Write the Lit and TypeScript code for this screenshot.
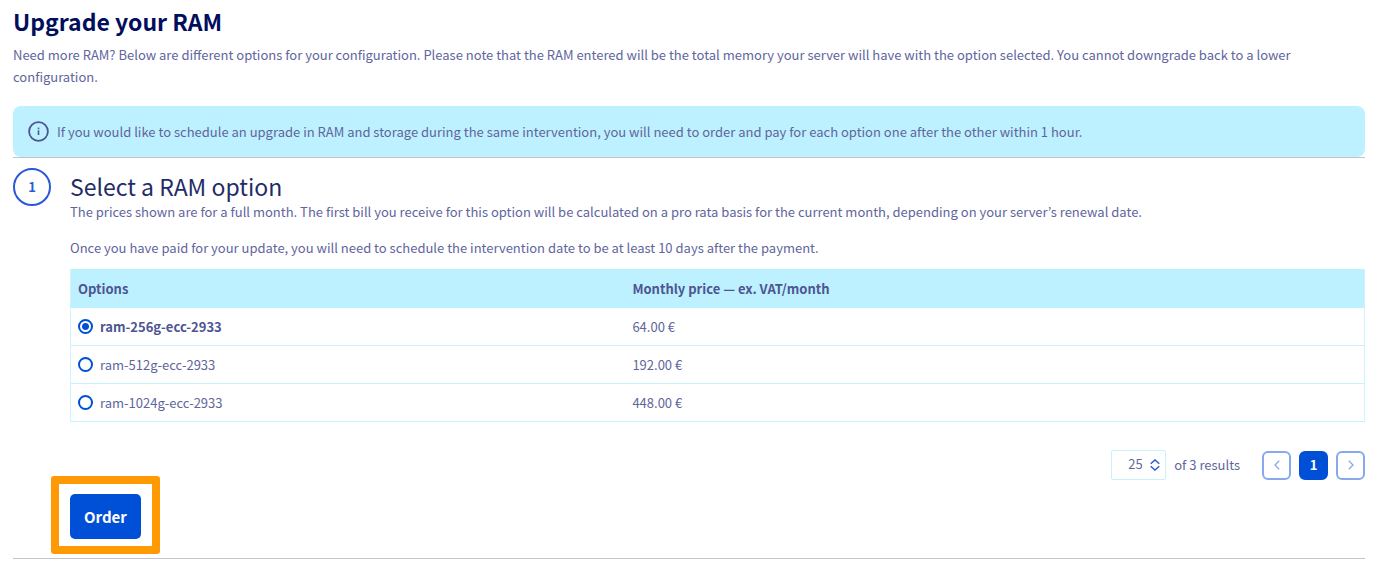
import { LitElement, html, css } from "lit";
import { customElement, state } from "lit/decorators.js";
import { classMap } from "lit/directives/class-map.js";

interface RamOption {
  id: string;
  price: string;
}

const OPTIONS: RamOption[] = [
  { id: "ram-256g-ecc-2933", price: "64.00 €" },
  { id: "ram-512g-ecc-2933", price: "192.00 €" },
  { id: "ram-1024g-ecc-2933", price: "448.00 €" },
];

@customElement("app-root")
export class AppRoot extends LitElement {
  static styles = css`
    :host {
      display: block;
      box-sizing: border-box;
      padding: 5px 35px 0 13px;
      background: #fff;
      color: #5f659d;
      font: 13px/22px "Noto Sans CJK KR", "Open Sans", sans-serif;
    }
    *, *::before, *::after { box-sizing: border-box; }
    h1, h2, p { margin: 0; }
    button, select { font: inherit; margin: 0; }
    h1 {
      color: #000e5c;
      font-size: 23px;
      line-height: 32px;
      font-weight: 700;
    }
    .intro { margin-top: 7px; padding-right: 24px; }
    .alert {
      display: flex;
      align-items: center;
      gap: 8px;
      margin-top: 18px;
      padding: 0 15px;
      min-height: 51px;
      border-radius: 8px;
      background: #bef1ff;
    }
    .alert svg { flex: none; }
    .step {
      display: flex;
      align-items: flex-start;
      gap: 19px;
      border-top: 1px solid #c4c4c4;
      border-bottom: 1px solid #c4c4c4;
      padding: 10px 0 4px;
    }
    .badge {
      flex: none;
      display: grid;
      place-items: center;
      width: 38px;
      height: 38px;
      border: 2px solid #2859dc;
      border-radius: 50%;
      color: #2859dc;
      font-weight: 700;
    }
    .body { flex: 1; min-width: 0; }
    h2 {
      color: #1f2c68;
      font-size: 23px;
      line-height: 30px;
      font-weight: 400;
      padding-top: 3px;
    }
    .body p + p { margin-top: 14px; }
    table {
      width: 100%;
      margin-top: 10px;
      border-spacing: 0;
      table-layout: fixed;
      border: 1px solid #cdf4ff;
      border-top: 0;
      border-bottom: 0;
    }
    th {
      height: 39px;
      padding: 0 7px;
      background: #bef1ff;
      color: #4d5592;
      text-align: left;
      font-weight: 700;
    }
    td {
      height: 38px;
      padding: 0 7px;
      border-bottom: 1px solid #c5f2ff;
    }
    tr > :last-child { padding-left: 8px; }
    .name { width: 42.8%; }
    .option {
      display: flex;
      align-items: center;
      gap: 7px;
    }
    .option.on { color: #4d5592; font-weight: 700; }
    .option input {
      appearance: none;
      flex: none;
      width: 15px;
      height: 15px;
      margin: 0;
      border: 2px solid #0050d7;
      border-radius: 50%;
      background: #fff;
    }
    .option input:checked {
      background: radial-gradient(circle, #0050d7 3px, #fff 4px);
    }
    .pager {
      display: flex;
      justify-content: flex-end;
      align-items: center;
      gap: 8px;
      margin-top: 28px;
    }
    .size { position: relative; display: block; }
    .size select {
      appearance: none;
      display: block;
      width: 55px;
      height: 30px;
      padding: 0 20px 2px 16px;
      border: 1px solid #c5f2ff;
      border-radius: 2px;
      background: #fff;
      color: inherit;
    }
    .size svg {
      position: absolute;
      right: 6px;
      top: 9px;
      pointer-events: none;
    }
    .results { margin-right: 14px; }
    .page {
      display: grid;
      place-items: center;
      width: 29px;
      height: 29px;
      padding: 0;
      border: 2px solid #85a9ec;
      border-radius: 6px;
      background: #fff;
      color: #85a9ec;
    }
    .page.current {
      border-color: #0050d7;
      background: #0050d7;
      color: #fff;
      font-weight: 700;
    }
    .highlight {
      width: fit-content;
      margin: -4px 0 0 -19px;
      padding: 10px 11px 7px;
      border: 8px solid #ff9a05;
      border-radius: 3px;
    }
    .order {
      display: block;
      height: 45px;
      padding: 0 14px;
      border: 0;
      border-radius: 5px;
      background: #0050d7;
      color: #fff;
      font-size: 15px;
      font-weight: 700;
    }
  `;

  @state() private selected = OPTIONS[0].id;

  private renderRow(option: RamOption) {
    const on = option.id === this.selected;
    return html`<tr>
      <td>
        <label class=${classMap({ option: true, on })}>
          <input type="radio" name="ram" .checked=${on} @change=${() => (this.selected = option.id)} />
          <span>${option.id}</span>
        </label>
      </td>
      <td>${option.price}</td>
    </tr>`;
  }

  render() {
    return html`
      <h1>Upgrade your RAM</h1>
      <p class="intro">Need more RAM? Below are different options for your configuration. Please note that the RAM entered will be the total memory your server will have with the option selected. You cannot downgrade back to a lower configuration.</p>
      <div class="alert" role="note">
        <svg width="21" height="21" viewBox="0 0 21 21" fill="none" stroke="#4d5592" aria-hidden="true">
          <circle cx="10.5" cy="10.5" r="9.4" stroke-width="1.8" />
          <path d="M10.5 9.3V14" stroke-width="1.6" />
          <path d="M10.5 6.6V8.2" stroke-width="1.6" />
        </svg>
        <span>If you would like to schedule an upgrade in RAM and storage during the same intervention, you will need to order and pay for each option one after the other within 1 hour.</span>
      </div>
      <section class="step">
        <span class="badge">1</span>
        <div class="body">
          <h2>Select a RAM option</h2>
          <p>The prices shown are for a full month. The first bill you receive for this option will be calculated on a pro rata basis for the current month, depending on your server’s renewal date.</p>
          <p>Once you have paid for your update, you will need to schedule the intervention date to be at least 10 days after the payment.</p>
          <table>
            <thead>
              <tr><th class="name" scope="col">Options</th><th scope="col">Monthly price — ex. VAT/month</th></tr>
            </thead>
            <tbody>${OPTIONS.map((o) => this.renderRow(o))}</tbody>
          </table>
          <div class="pager">
            <label class="size">
              <select aria-label="Results per page"><option>25</option><option>50</option><option>100</option></select>
              <svg width="10" height="12" viewBox="0 0 10 12" fill="none" stroke="#2859dc" stroke-width="1.4" aria-hidden="true">
                <path d="M.7 4.7 5 .9l4.3 3.8M.7 7.3 5 11.1l4.3-3.8" />
              </svg>
            </label>
            <span class="results">of 3 results</span>
            <button class="page" type="button" aria-label="Previous page">
              <svg width="6" height="10" viewBox="0 0 6 10" fill="none" stroke="currentColor" stroke-width="1.3"><path d="M5.2.8 1 5l4.2 4.2" /></svg>
            </button>
            <button class="page current" type="button" aria-current="page">1</button>
            <button class="page" type="button" aria-label="Next page">
              <svg width="6" height="10" viewBox="0 0 6 10" fill="none" stroke="currentColor" stroke-width="1.3"><path d="M.8.8 5 5 .8 9.2" /></svg>
            </button>
          </div>
          <div class="highlight"><button class="order" type="button">Order</button></div>
        </div>
      </section>
    `;
  }
}
